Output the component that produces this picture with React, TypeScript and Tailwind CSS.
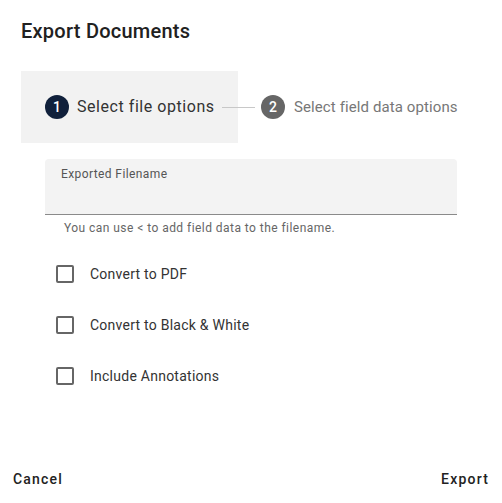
import React from 'react';

const options = ['Convert to PDF', 'Convert to Black & White', 'Include Annotations'];

export default function App() {
  const [checked, setChecked] = React.useState<boolean[]>([false, false, false]);

  const toggle = (i: number) => {
    setChecked(checked.map((c, idx) => (idx === i ? !c : c)));
  };

  return (
    <div className="w-[502px] h-[503px] bg-white flex flex-col font-['Roboto',sans-serif] text-[#212121]">
      <h1 className="pl-[21px] pt-[18px] text-[20px] leading-[26px] font-medium tracking-[0.25px] text-[#212121]">
        Export Documents
      </h1>

      <div className="flex items-center mt-[27px] pl-[21px]">
        <div className="flex items-center h-[72px] w-[217px] bg-[#f2f2f2] pl-[24px]">
          <div className="w-[24px] h-[24px] rounded-full bg-[#10203b] text-white text-[14px] font-medium flex items-center justify-center">
            1
          </div>
          <span className="ml-[8px] text-[16px] tracking-[0.55px] text-[#333]">Select file options</span>
        </div>
        <div className="w-[33px] h-px bg-[#c8c8c8] -ml-[16px]" />
        <div className="ml-[6px] w-[24px] h-[24px] rounded-full bg-[#666] text-white text-[14px] font-medium flex items-center justify-center">
          2
        </div>
        <span className="ml-[9px] text-[15px] tracking-[0.1px] text-[#777]">Select field data options</span>
      </div>

      <div className="mx-[45px] mt-[16px]">
        <div className="h-[56px] bg-[#f3f3f3] rounded-t-[4px] border-b border-[#8a8a8a] px-[16px] pt-[6px]">
          <div className="text-[12px] tracking-[0.4px] text-[#555]">Exported Filename</div>
        </div>
        <div className="pl-[19px] pt-[4px] text-[12px] tracking-[0.45px] text-[#666]">
          You can use &lt; to add field data to the filename.
        </div>
      </div>

      <div className="flex flex-col gap-[33px] pl-[56px] mt-[28px]">
        {options.map((label, i) => (
          <label key={label} className="flex items-center h-[18px] cursor-pointer" onClick={() => toggle(i)}>
            <span
              className={`w-[18px] h-[18px] rounded-[2px] border-2 ${
                checked[i] ? 'bg-[#10203b] border-[#10203b]' : 'border-[#666]'
              }`}
            />
            <span className="ml-[16px] text-[14px] tracking-[0.25px] text-[#333]">{label}</span>
          </label>
        ))}
      </div>

      <div className="mt-auto mb-[13px] flex justify-between px-[13px]">
        <button className="text-[14px] font-medium tracking-[1.2px] text-[#222]">Cancel</button>
        <button className="text-[14px] font-medium tracking-[1.2px] text-[#222]">Export</button>
      </div>
    </div>
  );
}
